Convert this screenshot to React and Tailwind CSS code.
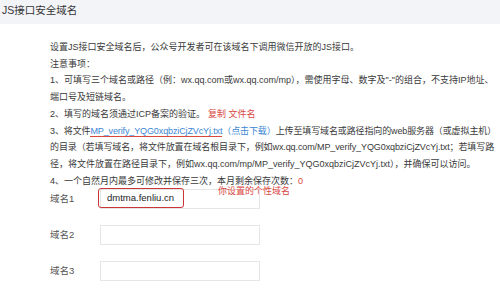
const font = "font-['Liberation_Sans','Noto_Sans_CJK_SC',sans-serif]";

const lines = [
  <>设置JS接口安全域名后，公众号开发者可在该域名下调用微信开放的JS接口。</>,
  <>注意事项：</>,
  <>1、可填写三个域名或路径（例：wx.qq.com或wx.qq.com/mp），需使用字母、数字及"-"的组合，不支持IP地址、</>,
  <>端口号及短链域名。</>,
  <>
    2、填写的域名须通过ICP备案的验证。
    <span className="ml-[3px] text-[#d9483f]">复制 文件名</span>
  </>,
  <span className="tracking-[-0.12px]">
    3、将文件
    <span className="text-[#3d86d4] border-b-[1.5px] border-[#d9483f]">MP_verify_YQG0xqbziCjZVcYj.txt</span>
    <span className="text-[#3d86d4]">（点击下载）</span>上传至填写域名或路径指向的web服务器（或虚拟主机）
  </span>,
  <span className="tracking-[-0.1px]">的目录（若填写域名，将文件放置在域名根目录下，例如wx.qq.com/MP_verify_YQG0xqbziCjZVcYj.txt；若填写路</span>,
  <>径，将文件放置在路径目录下，例如wx.qq.com/mp/MP_verify_YQG0xqbziCjZVcYj.txt），并确保可以访问。</>,
  <>
    4、一个自然月内最多可修改并保存三次，本月剩余保存次数：<span className="text-[#d9483f]">0</span>
  </>,
];

const DomainRow = ({ label, value, note }) => (
  <div className="relative flex items-center h-[20px]">
    <div className="w-[50px] text-[9.5px] text-[#555]">{label}</div>
    <div className="w-[160px] h-[20px] border border-[#e6e6e6] bg-white"></div>
    {value && (
      <div className="absolute left-[48px] top-[-1px] w-[86px] h-[20px] border-[1.5px] border-[#c8363a] rounded-[3px] flex items-center pl-[8px] text-[9.5px] text-[#222]">
        {value}
      </div>
    )}
    {note && (
      <div className="absolute left-[168px] top-[-4px] text-[9px] text-[#d9483f]">{note}</div>
    )}
  </div>
);

export default function App() {
  return (
    <div className={`w-[500px] h-[290px] bg-white overflow-hidden ${font}`}>
      <div className="h-[24px] bg-[#f3f4f7] pl-[2px] pt-[3px] text-[10.5px] leading-[14px] text-[#333]">
        JS接口安全域名
      </div>

      <div className="pl-[50px] pt-[15px] text-[9px] leading-[16.7px] text-[#3a3a3a]">
        {lines.map((l, i) => (
          <div key={i} className="whitespace-nowrap">{l}</div>
        ))}
      </div>

      <div className="pl-[50px] flex flex-col gap-[16px]">
        <DomainRow label="域名1" value="dmtma.fenliu.cn" note="你设置的个性域名" />
        <DomainRow label="域名2" />
        <DomainRow label="域名3" />
      </div>
    </div>
  );
}
